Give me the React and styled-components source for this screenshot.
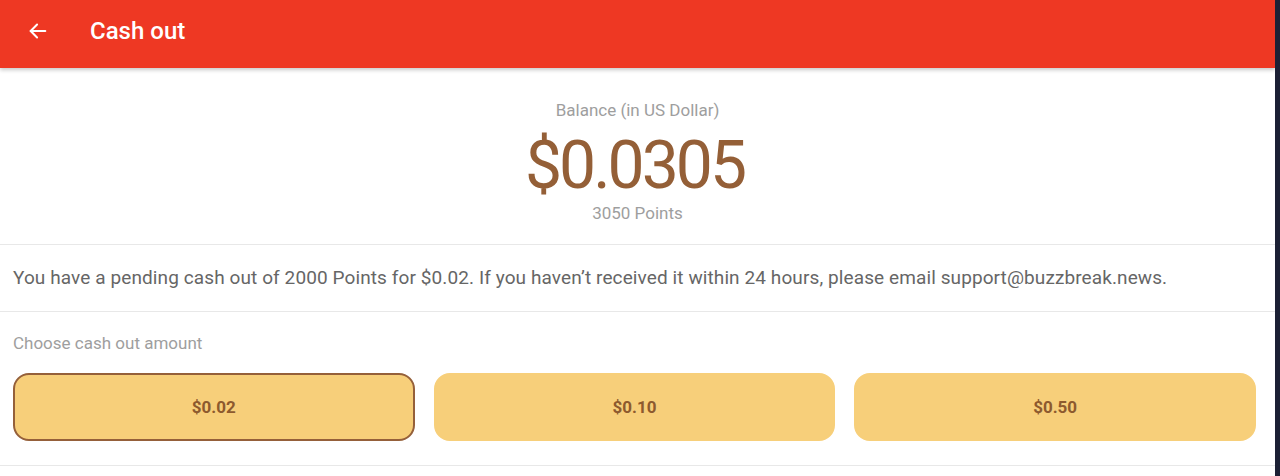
import React, { useState } from "react";
import styled, { createGlobalStyle } from "styled-components";

const Global = createGlobalStyle`
  html, body { margin: 0; padding: 0; background: #1c2035; }
  body { font-family: Roboto, "Noto Sans", sans-serif; }
  * { box-sizing: border-box; }
`;

const Page = styled.div`
  width: 1275px;
  height: 476px;
  background: #ffffff;
  overflow: hidden;
  display: flex;
  flex-direction: column;
`;

const Header = styled.header`
  height: 68px;
  background: #ee3823;
  display: flex;
  align-items: center;
  padding-left: 26px;
  padding-bottom: 6px;
  box-shadow: 0 2px 4px rgba(0, 0, 0, 0.22);
  position: relative;
  z-index: 1;
  flex-shrink: 0;
`;

const BackButton = styled.button`
  width: 24px;
  height: 24px;
  padding: 0;
  border: none;
  background: none;
  display: flex;
  align-items: center;
  justify-content: center;
  color: #fff;
`;

const Title = styled.h1`
  margin: 0 0 0 40px;
  font-size: 24px;
  font-weight: 500;
  color: #ffffff;
`;

const BalanceSection = styled.section`
  display: flex;
  flex-direction: column;
  align-items: center;
  padding-top: 32px;
  height: 177px;
  border-bottom: 1px solid #e8e8e8;
  flex-shrink: 0;
`;

const Label = styled.div`
  font-size: 17px;
  color: #9e9e9e;
  line-height: 20px;
`;

const Amount = styled.div`
  font-size: 66px;
  letter-spacing: -3px;
  color: #945f37;
  line-height: 74px;
  margin-top: 9px;
  margin-right: 6px;
`;

const Points = styled.div`
  font-size: 17px;
  color: #9e9e9e;
  line-height: 20px;
  margin-top: 0;
`;

const Notice = styled.p`
  margin: 0;
  height: 67px;
  padding: 0 13px 2px;
  display: flex;
  align-items: center;
  font-size: 19px;
  letter-spacing: 0.1px;
  color: #666666;
  border-bottom: 1px solid #e8e8e8;
  flex-shrink: 0;
`;

const ChooseSection = styled.section`
  padding: 21px 19px 24px 13px;
  border-bottom: 1px solid #e8e8e8;
  flex-shrink: 0;
`;

const SubLabel = styled.div`
  font-size: 17px;
  color: #9e9e9e;
  line-height: 20px;
`;

const Options = styled.div`
  display: grid;
  grid-template-columns: repeat(3, 1fr);
  gap: 19px;
  margin-top: 20px;
`;

const Option = styled.button`
  height: 68px;
  border-radius: 16px;
  background: #f7cf7a;
  border: 2px solid ${(p) => (p.$selected ? "#95603a" : "#f7cf7a")};
  font-family: Roboto, "Noto Sans", sans-serif;
  font-size: 17px;
  font-weight: 700;
  color: #8d5a2e;
  cursor: pointer;
  padding: 0;
`;

const amounts = ["$0.02", "$0.10", "$0.50"];

export default function App() {
  const [selected, setSelected] = useState(0);
  return (
    <>
      <Global />
      <Page>
        <Header>
          <BackButton aria-label="Back">
            <svg width="22" height="22" viewBox="0 0 24 24" fill="none" stroke="#fff" strokeWidth="2.2" strokeLinecap="round" strokeLinejoin="round">
              <path d="M20 12H4" />
              <path d="M11 5l-7 7 7 7" />
            </svg>
          </BackButton>
          <Title>Cash out</Title>
        </Header>
        <BalanceSection>
          <Label>Balance (in US Dollar)</Label>
          <Amount>$0.0305</Amount>
          <Points>3050 Points</Points>
        </BalanceSection>
        <Notice>
          You have a pending cash out of 2000 Points for $0.02. If you haven’t received it within 24 hours, please email support@buzzbreak.news.
        </Notice>
        <ChooseSection>
          <SubLabel>Choose cash out amount</SubLabel>
          <Options>
            {amounts.map((a, i) => (
              <Option key={a} $selected={i === selected} onClick={() => setSelected(i)}>
                {a}
              </Option>
            ))}
          </Options>
        </ChooseSection>
      </Page>
    </>
  );
}
